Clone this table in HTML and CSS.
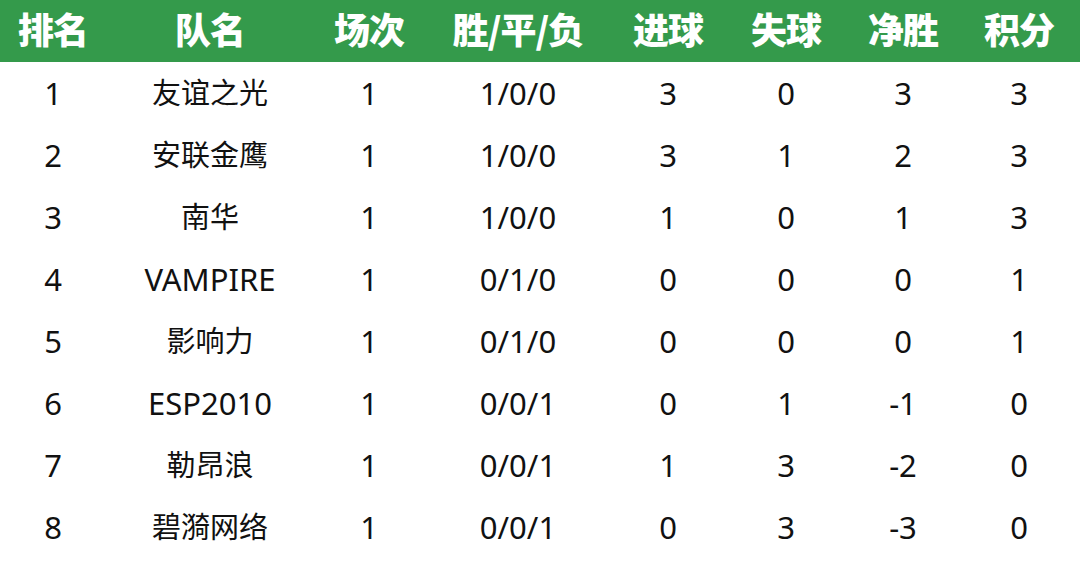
FILE: index.html
```html
<!DOCTYPE html>
<html lang="zh-CN">
<head>
<meta charset="utf-8">
<title>积分榜</title>
<link rel="stylesheet" href="styles.css">
</head>
<body>
<div class="standings">
  <div class="row head">
    <div>排名</div><div>队名</div><div>场次</div><div>胜/平/负</div><div>进球</div><div>失球</div><div>净胜</div><div>积分</div>
  </div>
  <div class="row"><div>1</div><div class="cn">友谊之光</div><div>1</div><div>1/0/0</div><div>3</div><div>0</div><div>3</div><div>3</div></div>
  <div class="row"><div>2</div><div class="cn">安联金鹰</div><div>1</div><div>1/0/0</div><div>3</div><div>1</div><div>2</div><div>3</div></div>
  <div class="row"><div>3</div><div class="cn">南华</div><div>1</div><div>1/0/0</div><div>1</div><div>0</div><div>1</div><div>3</div></div>
  <div class="row"><div>4</div><div>VAMPIRE</div><div>1</div><div>0/1/0</div><div>0</div><div>0</div><div>0</div><div>1</div></div>
  <div class="row"><div>5</div><div class="cn">影响力</div><div>1</div><div>0/1/0</div><div>0</div><div>0</div><div>0</div><div>1</div></div>
  <div class="row"><div>6</div><div>ESP2010</div><div>1</div><div>0/0/1</div><div>0</div><div>1</div><div>-1</div><div>0</div></div>
  <div class="row"><div>7</div><div class="cn">勒昂浪</div><div>1</div><div>0/0/1</div><div>1</div><div>3</div><div>-2</div><div>0</div></div>
  <div class="row"><div>8</div><div class="cn">碧漪网络</div><div>1</div><div>0/0/1</div><div>0</div><div>3</div><div>-3</div><div>0</div></div>
</div>
</body>
</html>
```
FILE: styles.css
```css
html, body {
  margin: 0;
  padding: 0;
  background: #ffffff;
}
.standings {
  width: 1080px;
  height: 570px;
  background: #ffffff;
  font-family: "Noto Sans", "Noto Sans CJK SC", sans-serif;
  color: #111111;
}
.row {
  display: grid;
  grid-template-columns: 106px 208px 110px 188px 112px 124px 110px 122px;
  height: 62px;
  align-items: center;
  font-size: 31px;
}
.row > div {
  text-align: center;
  line-height: 62px;
}
.row > .cn {
  font-size: 29px;
}
.head {
  background: #349a4b;
  color: #ffffff;
  font-family: "Noto Sans CJK SC", sans-serif;
  font-weight: 900;
  font-size: 36px;
  height: 62px;
}
.head > div {
  line-height: 52px;
  padding-bottom: 6px;
  letter-spacing: -1px;
}
```
